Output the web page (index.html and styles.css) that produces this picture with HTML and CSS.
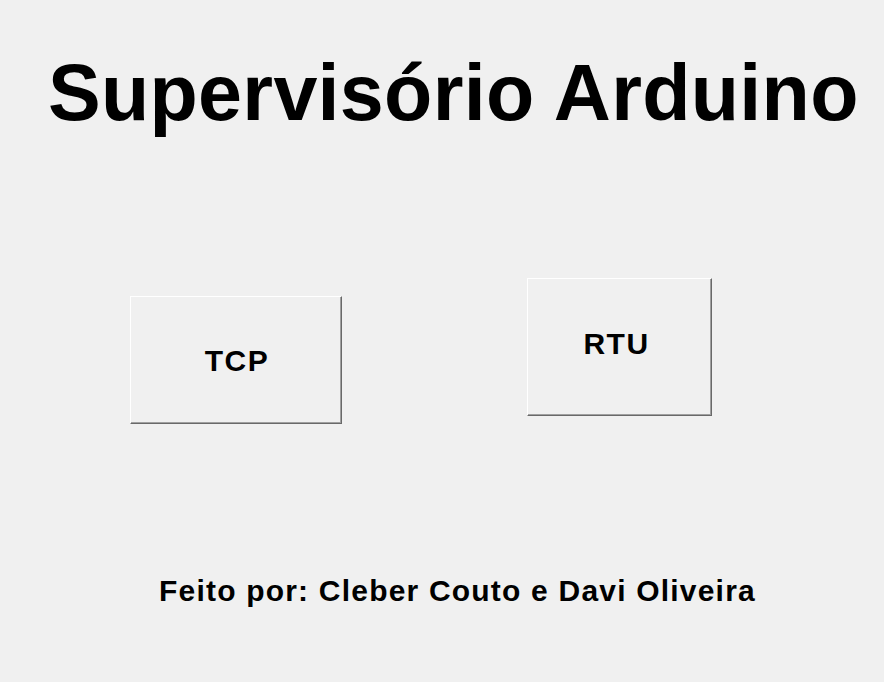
FILE: index.html
```html
<!DOCTYPE html>
<html lang="pt">
<head>
<meta charset="utf-8">
<title>Supervisório Arduino</title>
<link rel="stylesheet" href="styles.css">
</head>
<body>
<main class="app">
  <h1 class="title">Supervisório Arduino</h1>
  <div class="buttons">
    <button class="btn btn-tcp">TCP</button>
    <button class="btn btn-rtu">RTU</button>
  </div>
  <p class="credits">Feito por: Cleber Couto e Davi Oliveira</p>
</main>
</body>
</html>
```

FILE: styles.css
```css
html, body {
  margin: 0;
  padding: 0;
  background: #f0f0f0;
}

.app {
  width: 884px;
  height: 682px;
  font-family: "Liberation Sans", Arial, sans-serif;
  color: #000;
  overflow: hidden;
}

.title {
  margin: 0;
  padding: 53px 0 0 48px;
  font-size: 79px;
  font-weight: bold;
  letter-spacing: 0.3px;
  line-height: 1;
  white-space: nowrap;
}

.buttons {
  display: flex;
  align-items: flex-start;
  gap: 185px;
  margin-top: 146px;
  padding-left: 130px;
}

.btn {
  box-sizing: border-box;
  display: flex;
  align-items: center;
  justify-content: center;
  margin: 0;
  padding: 0;
  background: #f0f0f0;
  border: 1px solid;
  border-color: #ffffff #696969 #696969 #ffffff;
  box-shadow: inset -1px -1px 0 #a0a0a0;
  font-family: "Liberation Sans", Arial, sans-serif;
  font-weight: bold;
  font-size: 30px;
  letter-spacing: 1.5px;
  line-height: 1;
  color: #000;
  cursor: pointer;
}

.btn-tcp {
  width: 212px;
  height: 128px;
  margin-top: 18px;
  padding: 2px 0 0 2px;
}

.btn-rtu {
  width: 185px;
  height: 138px;
  padding: 0 6px 7px 0;
}

.credits {
  margin: 152px 0 0;
  padding-left: 159px;
  font-size: 30px;
  font-weight: bold;
  letter-spacing: 1.2px;
  line-height: 1;
  white-space: nowrap;
}
```
